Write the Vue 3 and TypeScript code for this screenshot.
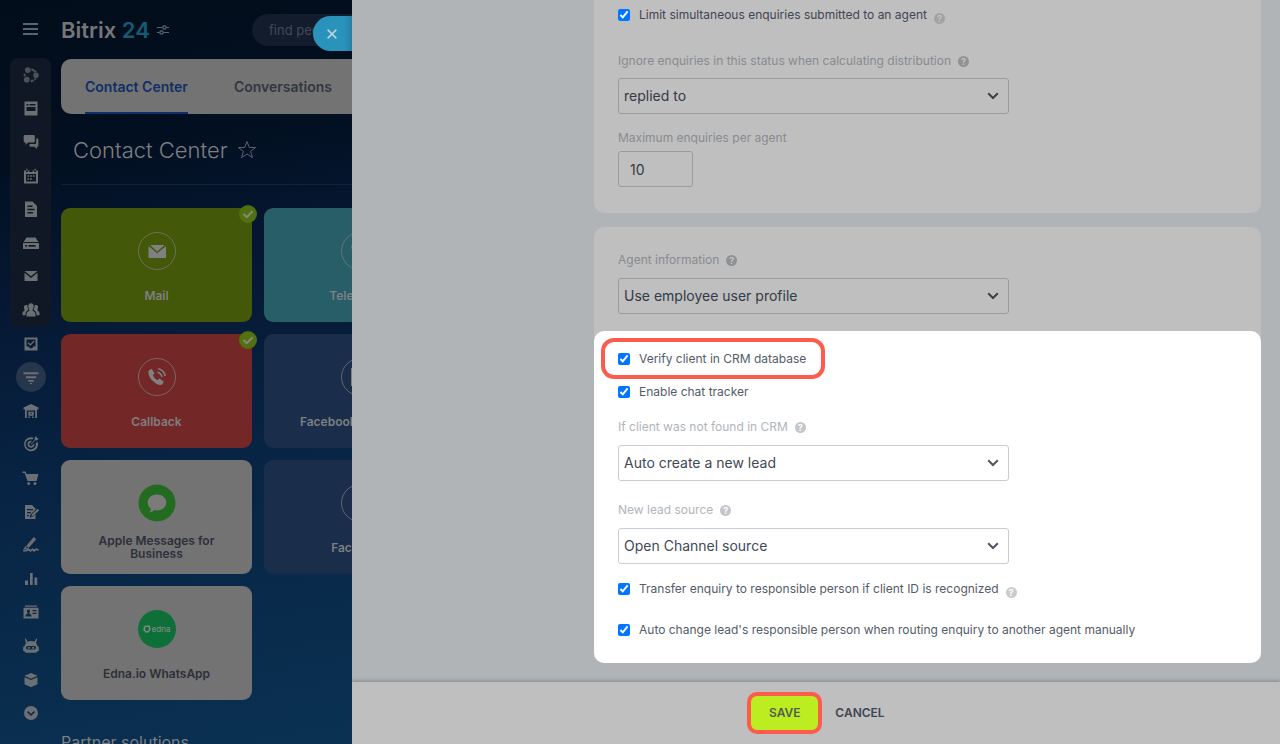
<script setup lang="ts">
import { ref } from 'vue'

interface Tile {
  name: string
  tone: string
  icon: string
  active?: boolean
}

const tiles: Tile[] = [
  { name: 'Mail', tone: 'green', icon: 'mail', active: true },
  { name: 'Telephony', tone: 'teal', icon: 'phone' },
  { name: 'Callback', tone: 'red', icon: 'callback', active: true },
  { name: 'Facebook Messages', tone: 'navy', icon: 'fb' },
  { name: 'Apple Messages for Business', tone: 'plain', icon: 'apple' },
  { name: 'Facebook', tone: 'navy', icon: 'none' },
  { name: 'Edna.io WhatsApp', tone: 'plain', icon: 'edna' },
]

interface NavItem {
  label: string
  path: string
  current?: boolean
  soft?: boolean
}

const pinned: NavItem[] = [
  { label: 'Collaboration', soft: true, path: 'M4.800 .2a2.900 2.900 0 1 1 0 5.800a2.900 2.900 0 0 1 0-5.800zM13 5.400a2.800 2.800 0 1 1 0 5.600a2.800 2.800 0 0 1 0-5.600zM3.800 9.800a2.900 2.900 0 1 1 0 5.800a2.900 2.900 0 0 1 0-5.800zM8.400 1.600l2.600.6-.6 2L8.300 3.800zM11.600 2.600l2 2-1.800 1.200-1.600-1.800zM7.600 13l2.600-.6.8 1.800-3 1.200zM11 12l1.500-1.200 1.200 1-1.900 1.900zM.6 6.400l2 .6.2 2.200L.8 9.400z' },
  { label: 'Feed', path: 'M1.500 1.500h13v14h-13zM3.500 4v1.500h2V4zM6.500 4v1.500h6V4zM3.500 7v4h9V7z' },
  { label: 'Messenger', path: 'M2 1h8.500a1.300 1.300 0 0 1 1.300 1.300v5a1.300 1.300 0 0 1-1.300 1.300H5.200L2.600 11V8.600H2A1.300 1.300 0 0 1 .7 7.300v-5A1.300 1.300 0 0 1 2 1zM13.200 4.500h1.200a1 1 0 0 1 1 1v6.200a1 1 0 0 1-1 1h-.6V15l-2.500-2.300H7.500a1 1 0 0 1-1-1V10h5.400a1.300 1.300 0 0 0 1.300-1.300z' },
  { label: 'Calendar', path: 'M1 2.500h2V4h2V2.500h1.500V4h3V2.500H11V4h2V2.500h2v13H1zM3 6v7.500h10V6zM4.500 7.200h1.700v1.600H4.500zM7.200 7.200h1.700v1.600H7.200zM9.900 7.200h1.700v1.600H9.900zM4.500 10.200h1.700v1.600H4.500zM7.200 10.200h1.700v1.600H7.200zM3.300.8h1.200v2H3.300zM11.500.8h1.200v2h-1.200z' },
  { label: 'Documents', path: 'M2 .5h7.500L14 5v11H2zM4.500 4.500V6h5V4.500zM4.500 7.700v1.500h7V7.700zM4.500 11v1.500H10V11z' },
  { label: 'Drive', path: 'M3.500 2.500h9L15.500 7H.5zM0 8h16v6H0zM2.200 10v1.800H4V10zM5.500 10v1.800h7V10z' },
  { label: 'Mail', path: 'M1.500 3h13L8 8.200zM1.500 4.800L8 10l6.500-5.200V13h-13z' },
  { label: 'Workgroups', path: 'M8 1.200c1.700 0 2.700 1.200 2.700 3S9.500 7.600 9.500 8.200c0 1 3 1.200 3 3.800v2.500h-9V12c0-2.600 3-2.800 3-3.800 0-.6-1.200-1.900-1.200-4s1-3 2.700-3zM3.200 3c.6 0 1 .1 1.300.4 0 2.200.6 3.100 1 4.200-.4 1.200-2.900 1.500-3 4.400v1.300H-.5V11c0-2 2.200-2 2.200-3 0-.5-.8-1.300-.8-2.700C.9 3.700 1.800 3 3.200 3zM12.800 3c-.6 0-1 .1-1.300.4 0 2.200-.6 3.100-1 4.200.4 1.200 2.900 1.500 3 4.400v1.300h3V11c0-2-2.200-2-2.200-3 0-.5.8-1.300.8-2.700C15.100 3.700 14.200 3 12.800 3z' },
]

const others: NavItem[] = [
  { label: 'Tasks', path: 'M1.500 1.500h13v13h-13zM3.500 3.500v7h2.200l1 1.700h2.600l1-1.700h2.200v-7zM5.500 6.200L7.300 8l3.500-3.400.9 1-4.400 4.200-2.700-2.600z' },
  { label: 'CRM', current: true, path: 'M.5 3.200h15v2H.5zM2.800 7.200h10.400v2H2.800zM5.300 11h5.400v1.800H5.300zM7 14h2v1H7z' },
  { label: 'Inventory', path: 'M8 1l7.500 3.500v2H14V15h-1.800V7.500H3.800V15H2V6.500H.5v-2zM5.300 8.700h5.400v4H5.300zM7.400 9.700v1.500h1.200V9.700zM5.300 13.400H7V15H5.300zM9 13.400h1.700V15H9z' },
  { label: 'Marketing', path: 'M8 1.200c1 0 1.900.2 2.700.5L9.300 3.400A5.200 5.200 0 1 0 12.800 7l1.800-1.300A7 7 0 1 1 8 1.200zM8 4.700l.8.100-1 1.700a1.800 1.800 0 1 0 2 1.900l1.600-1A3.500 3.500 0 1 1 8 4.700zM7.500 8.200l4-4.200.2-2.500L13.500 0l.3 2 2 .4L14.200 4.300l-2.200.2-4 4.200z' },
  { label: 'Sales', path: 'M-.5 1.500h3l.9 2.500H15.500l-2 7H4.500L1.600 3H-.5zM5.700 12a1.500 1.500 0 1 1 0 3a1.500 1.500 0 0 1 0-3zM12 12a1.500 1.500 0 1 1 0 3a1.500 1.500 0 0 1 0-3z' },
  { label: 'Sites', path: 'M2 1h7l3.500 3.500v1L7.600 10.500 6.800 13.500l3-.8 2.700-2.500V15H2zM4 5v1.300h6V5zM4 8v1.200h4V8zM4 11v1.200h2V11zM14.500 4.800l1.600 1.500-5.600 5.500-2.200.7.700-2.200z' },
  { label: 'e-Signature', path: 'M10.800 0l2.400 2.200-6.500 7.500L2.800 11.600l1.600-4.200zM3 8.600l2.800 2.300-1.300 1H.6zM.2 12.400h3.300l2-1.200L7.500 12.800l2-1.600 1.700 1.400 1.600-1.300 2.900.8v1.700l-2.600-.5-1.900 1.600-1.800-1.500-2 1.600-2-1.500-1.600 1H.2z' },
  { label: 'Analytics', path: 'M2 9.500h3V14H2zM7 2h2.700v12H7zM11.500 6.500h2.700V14h-2.700z' },
  { label: 'Contacts', path: 'M2 1.500h12v1.200H2zM.5 3.800h15v10.700H.5zM5.500 5.500C4.300 5.500 4 6.300 4 7.200s.7 1.800.7 2.200-2.200.6-2.200 2V12.500h6v-1.100c0-1.400-2.200-1.600-2.200-2S7 8.100 7 7.200s-.3-1.700-1.500-1.700zM9.500 6v1.300h4V6zM9.500 8.700V10h4V8.700z' },
  { label: 'Automation', path: 'M2.800.5l1.800 3.200Q8 2.500 11.400 3.700L13.200.5l1 .5-1.200 4Q14.300 6.500 14.500 8.500l1.300.3v4.100l-1.300.3Q14.300 14.500 12.500 14.800h-9Q1.700 14.500 1.500 13.200L.2 12.900V8.800l1.300-.3Q1.700 6.500 3 5L1.800 1zM4.500 8Q3 8.200 3 9.800t1.500 1.700h7Q13 11.300 13 9.800T11.500 8zM5 9h1.800v1.700H5zM9.200 9H11v1.700H9.200z' },
  { label: 'Market', path: 'M8 1l6.500 2.800L8 6.700 1.500 3.800zM1.500 5.200L8 8l6.500-2.800v7L8 15.200l-6.500-3z' },
  { label: 'More', path: 'M8 1a7 7 0 1 1 0 14A7 7 0 0 1 8 1zM5 6L4 7.200 8 11l4-3.800L11 6 8 8.800z' },
]

const limitEnquiries = ref(true)
const ignoreStatus = ref('replied to')
const maxEnquiries = ref('10')
const agentInfo = ref('Use employee user profile')
const verifyClient = ref(true)
const chatTracker = ref(true)
const notFound = ref('Auto create a new lead')
const leadSource = ref('Open Channel source')
const transferEnquiry = ref(true)
const autoChange = ref(true)
</script>

<template>
  <div class="app">
    <div class="portal">
      <nav class="rail" aria-label="Main menu">
        <button class="burger" type="button" aria-label="Menu"><i></i><i></i><i></i></button>
        <div class="group pinned">
          <a v-for="item in pinned" :key="item.label" href="#" class="nav" :class="{ soft: item.soft }" :aria-label="item.label">
            <svg viewBox="0 0 16 16"><path :d="item.path" fill-rule="evenodd" /></svg>
          </a>
        </div>
        <div class="group others">
          <a v-for="item in others" :key="item.label" href="#" class="nav" :class="{ current: item.current }" :aria-label="item.label">
            <svg viewBox="0 0 16 16"><path :d="item.path" fill-rule="evenodd" /></svg>
          </a>
        </div>
      </nav>

      <div class="desk">
        <header class="top">
          <a href="#" class="logo">Bitrix <b>24</b></a>
          <svg class="tune" viewBox="0 0 12 10"><path d="M0 2.500h5.500M9.500 2.500H12M0 7.500h2.500M6.500 7.500H12" /><circle cx="7.500" cy="2.500" r="1.700" /><circle cx="4.500" cy="7.500" r="1.700" /></svg>
          <input class="search" type="text" placeholder="find people, documents" aria-label="Search" />
        </header>

        <div class="tabs">
          <a href="#" class="tab selected">Contact Center</a>
          <a href="#" class="tab">Conversations</a>
        </div>

        <div class="heading">
          <h1>Contact Center</h1>
          <svg class="star" viewBox="0 0 20 20"><path d="M10 1.500l2.300 6h6.300l-5 3.900 1.900 6.300L10 14l-5.500 3.700 1.900-6.300-5-3.900h6.300z" /></svg>
        </div>

        <div class="tiles">
          <a v-for="tile in tiles" :key="tile.name" href="#" class="tile" :class="tile.tone">
            <svg v-if="tile.icon === 'apple'" class="mark" viewBox="0 0 38 38">
              <circle cx="19" cy="19" r="18.500" fill="#236b20" />
              <path d="M19 10.500c5.200 0 9.300 3.500 9.300 8s-4.100 8-9.300 8c-1 0-2-.1-2.900-.4-1.200 1.500-3 2.200-5 2.300 1.300-1.200 1.900-2.400 1.800-3.700C10.800 23.200 9.700 21 9.700 18.500c0-4.500 4.100-8 9.300-8z" fill="#7b7b7b" />
            </svg>
            <span v-else-if="tile.icon === 'edna'" class="mark edna">
              <svg viewBox="0 0 8 8"><path d="M2 1.500l4-.5 1 2.500L5.500 6.500 3 7 1 4.500z" /></svg>edna
            </span>
            <svg v-else class="mark" viewBox="0 0 38 38">
              <circle cx="19" cy="19" r="18.500" class="ring" />
              <g v-if="tile.icon === 'mail'" class="glyph"><path d="M12 13h14.500L19.200 19.500zM10.500 14l8.700 7.200L28 14v12H10.500z" /></g>
              <g v-else-if="tile.icon === 'callback'" class="glyph">
                <path d="M11.200 12.200l2.300-1.400 3.100 4.400-1.700 2c.9 2.200 2.400 3.700 4.600 4.800l2.200-1.400 4.200 3.200-1.500 2.500c-1.300 1-3.600.9-6-.5-3.800-2.200-6.700-5.600-7.700-9.200-.5-2-.4-3.500.5-4.400z" />
                <path d="M19.500 14.200q3.800 1 4.600 4.800M20.200 10.800q5.900 1.300 7 7.200" class="wave" />
              </g>
              <g v-else-if="tile.icon === 'phone'" class="glyph"><path d="M11.200 12.200l2.300-1.400 3.100 4.400-1.700 2c.9 2.200 2.400 3.700 4.600 4.800l2.200-1.400 4.200 3.200-1.500 2.500c-1.300 1-3.600.9-6-.5-3.800-2.200-6.700-5.600-7.700-9.200-.5-2-.4-3.500.5-4.400z" /></g>
              <g v-else-if="tile.icon === 'fb'" class="glyph"><path d="M10 10h18v18h-5v-7h2.500V18H23v-2h2.500v-3h-3q-2.500 0-2.500 3v2h-2v3h2v7H10z" /></g>
            </svg>
            <span class="name">{{ tile.name }}</span>
            <svg v-if="tile.active" class="badge" viewBox="0 0 18 18"><circle cx="9" cy="9" r="9" /><path d="M4.500 9l3.300 3.200 5.800-6" /></svg>
          </a>
        </div>
        <h2>Partner solutions</h2>
      </div>

      <button class="close" type="button" aria-label="Close">
        <svg viewBox="0 0 10 10"><path d="M.6.6l8.800 8.800M9.400.6L.6 9.400" /></svg>
      </button>
    </div>

    <main class="slider">
      <form class="body" @submit.prevent>
        <section class="card first">
          <div class="check">
            <input id="limit" v-model="limitEnquiries" type="checkbox" />
            <label for="limit">Limit simultaneous enquiries submitted to an agent</label>
            <span class="hint low">?</span>
          </div>
          <div class="caption status"><label for="status">Ignore enquiries in this status when calculating distribution</label><span class="hint">?</span></div>
          <div class="select">
            <select id="status" v-model="ignoreStatus"><option>replied to</option></select>
            <svg viewBox="0 0 12 8"><path d="M1.200 1.200L6 6l4.800-4.800" /></svg>
          </div>
          <div class="caption maximum"><label for="max">Maximum enquiries per agent</label></div>
          <input id="max" v-model="maxEnquiries" class="number" type="text" />
        </section>

        <section class="card second">
          <div class="dimmed">
            <div class="caption"><label for="agent">Agent information</label><span class="hint">?</span></div>
            <div class="select">
              <select id="agent" v-model="agentInfo"><option>Use employee user profile</option></select>
              <svg viewBox="0 0 12 8"><path d="M1.200 1.200L6 6l4.800-4.800" /></svg>
            </div>
          </div>
          <div class="spot">
            <div class="check outlined">
              <input id="verify" v-model="verifyClient" type="checkbox" />
              <label for="verify">Verify client in CRM database</label>
            </div>
            <div class="check tracker">
              <input id="tracker" v-model="chatTracker" type="checkbox" />
              <label for="tracker">Enable chat tracker</label>
            </div>
            <div class="caption lost"><label for="lost">If client was not found in CRM</label><span class="hint">?</span></div>
            <div class="select">
              <select id="lost" v-model="notFound"><option>Auto create a new lead</option></select>
              <svg viewBox="0 0 12 8"><path d="M1.200 1.200L6 6l4.800-4.800" /></svg>
            </div>
            <div class="caption source"><label for="source">New lead source</label><span class="hint">?</span></div>
            <div class="select">
              <select id="source" v-model="leadSource"><option>Open Channel source</option></select>
              <svg viewBox="0 0 12 8"><path d="M1.200 1.200L6 6l4.800-4.800" /></svg>
            </div>
            <div class="check transfer">
              <input id="transfer" v-model="transferEnquiry" type="checkbox" />
              <label for="transfer">Transfer enquiry to responsible person if client ID is recognized</label>
              <span class="hint low">?</span>
            </div>
            <div class="check change">
              <input id="change" v-model="autoChange" type="checkbox" />
              <label for="change">Auto change lead's responsible person when routing enquiry to another agent manually</label>
            </div>
          </div>
        </section>
      </form>
      <footer class="actions">
        <button class="save" type="button">SAVE</button>
        <button class="cancel" type="button">CANCEL</button>
      </footer>
    </main>
  </div>
</template>

<style>
body {
  background: #b0b4b7;
}
</style>

<style scoped>
* {
  box-sizing: border-box;
}
.app {
  display: grid;
  grid-template-columns: 352px minmax(0, 1fr);
  height: 100vh;
  overflow: hidden;
  font-family: Inter, "Liberation Sans", sans-serif;
  font-size: 12px;
  line-height: 16px;
  color: #434956;
}
a {
  color: inherit;
  text-decoration: none;
}
button {
  border: 0;
  padding: 0;
  background: none;
  font: inherit;
  cursor: pointer;
}

/* portal page behind the slider */
.portal {
  position: relative;
  display: flex;
  height: 100vh;
  overflow: hidden;
  color: #7d7f82;
  background: linear-gradient(170deg, #020d1a 0%, #020f20 20%, #051732 36%, #082444 62%, #0a3152 100%);
}
.rail {
  display: grid;
  grid-template-rows: 58px 8fr 12fr;
  flex: 0 0 61px;
  height: 100vh;
  padding-bottom: 14px;
}
.burger {
  display: grid;
  gap: 3px;
  align-self: center;
  justify-self: center;
  width: 15px;
}
.burger i {
  height: 2px;
  background: #5d636b;
}
.group {
  display: grid;
  grid-auto-rows: 1fr;
  margin: 0 10px;
}
.pinned {
  border-radius: 8px;
  background: #0f1824;
}
.nav {
  display: grid;
  place-items: center;
  min-height: 0;
}
.nav svg {
  width: 16px;
  height: 16px;
  overflow: visible;
  fill: #6c6f73;
}
.nav.soft svg {
  fill: #4c5259;
}
.nav.current {
  justify-self: center;
  align-self: center;
  width: 30px;
  height: 30px;
  border-radius: 50%;
  background: #26364d;
}
.desk {
  flex: 0 0 auto;
  width: 600px;
}
.top {
  display: flex;
  align-items: center;
  height: 59px;
}
.logo {
  width: 96px;
  font-size: 22px;
  line-height: 26px;
  font-weight: 600;
  white-space: nowrap;
  color: #747678;
}
.logo b {
  font-weight: 600;
  color: #185a72;
}
.tune {
  width: 12px;
  height: 10px;
  fill: none;
  stroke: #5d636b;
  stroke-width: 1.200;
}
.search {
  width: 320px;
  height: 32px;
  margin-left: 83px;
  padding: 0 17px;
  border: 0;
  border-radius: 16px;
  background: #131c2c;
  font: inherit;
  font-size: 13px;
}
.search::placeholder {
  color: #414955;
}
.tabs {
  display: flex;
  gap: 46px;
  height: 55px;
  padding: 0 24px;
  border-radius: 10px;
  background: #737373;
}
.tab {
  padding-top: 19px;
  font-size: 14px;
  line-height: 18px;
  font-weight: 600;
  color: #32363f;
}
.tab.selected {
  border-bottom: 2px solid #0f2f6c;
  color: #102f68;
}
.heading {
  display: flex;
  align-items: center;
  gap: 9px;
  height: 71px;
  padding: 2px 0 0 12px;
  border-bottom: 1px solid #10223a;
}
h1 {
  margin: 0;
  font-size: 22px;
  line-height: 30px;
  font-weight: 300;
}
.star {
  width: 20px;
  height: 20px;
  fill: none;
  stroke: #5d636b;
}
.tiles {
  display: grid;
  grid-template-columns: 191px 191px;
  grid-auto-rows: 114px;
  gap: 12px;
  margin-top: 23px;
}
.tile {
  position: relative;
  display: flex;
  flex-direction: column;
  align-items: center;
  padding: 24px 32px 2px;
  border-radius: 9px;
  text-align: center;
  font-size: 12px;
  line-height: 13px;
  font-weight: 600;
}
.green { background: #435808; }
.teal { background: #285e68; }
.red { background: #732726; }
.navy { background: #1a2d4b; }
.plain {
  background: #737373;
  color: #2d303b;
}
.name {
  display: flex;
  flex: 1;
  align-items: center;
}
.navy .name {
  white-space: nowrap;
}
.mark {
  width: 38px;
  height: 38px;
  flex: none;
}
.ring {
  fill: none;
  stroke: #7d7f7a;
  stroke-opacity: 0.700;
}
.glyph {
  fill: #7f8080;
}
.wave {
  fill: none;
  stroke: #7f8080;
  stroke-width: 1.600;
}
.edna {
  display: flex;
  align-items: center;
  justify-content: center;
  gap: 1px;
  border-radius: 50%;
  background: #0f6f38;
  color: #7c8b81;
  font-size: 8px;
  line-height: 10px;
  font-weight: 500;
}
.edna svg {
  width: 8px;
  height: 8px;
  fill: none;
  stroke: #7c8b81;
  stroke-width: 1.500;
}
.badge {
  position: absolute;
  top: -3px;
  right: -5px;
  width: 18px;
  height: 18px;
  fill: #517010;
}
.badge path {
  fill: none;
  stroke: #85887f;
  stroke-width: 2;
}
h2 {
  margin: 32px 0 0;
  font-size: 16px;
  line-height: 20px;
  font-weight: 400;
}
.close {
  position: absolute;
  top: 16px;
  right: 0;
  display: flex;
  align-items: center;
  width: 39px;
  height: 35px;
  padding-left: 14px;
  border-radius: 18px 0 0 18px;
  background: linear-gradient(90deg, #2993bb 80%, #2480a4);
}
.close svg {
  width: 10px;
  height: 10px;
  fill: none;
  stroke: #bfd3da;
  stroke-width: 1.500;
}

/* slider panel */
.slider {
  display: flex;
  flex-direction: column;
  height: 100vh;
  background: #b0b4b7;
}
.body {
  flex: 1;
  min-height: 0;
  padding: 0 19px 0 242px;
}
.card {
  background: #bfbfbf;
}
.first {
  padding: 7px 24px 26px;
  border-radius: 0 0 10px 10px;
}
.second {
  margin-top: 14px;
  border-radius: 10px;
}
.dimmed {
  padding: 25px 24px 17px;
}
.spot {
  padding: 7px 24px 25px;
  border-radius: 10px;
  background: #fff;
}
.check {
  display: flex;
  align-items: center;
  height: 16px;
  color: #535c69;
}
.first .check {
  color: #3f4552;
}
.check input {
  width: 12px;
  height: 12px;
  margin: 0 9px 0 0;
  accent-color: #0075ff;
}
.outlined {
  width: fit-content;
  height: 41px;
  margin-left: -17px;
  padding: 0 15px 0 13px;
  border: 4px solid #fd5c4c;
  border-radius: 13px;
}
.caption {
  display: flex;
  align-items: center;
  height: 16px;
  margin-bottom: 10px;
  color: #888b90;
}
.spot .caption {
  color: #b0b5bb;
}
.hint {
  display: grid;
  place-items: center;
  width: 11px;
  height: 11px;
  margin-left: 7px;
  border-radius: 50%;
  background: #8f9295;
  color: #c4c4c4;
  font-size: 9px;
  line-height: 11px;
  font-weight: 700;
}
.spot .hint {
  background: #c3c6ca;
  color: #fff;
}
.hint.low {
  align-self: flex-end;
  margin-bottom: -1px;
  background: #a0a2a4;
}
.spot .hint.low {
  background: #c9cbce;
}
.status { margin-top: 30px; margin-bottom: 9px; }
.maximum { margin-top: 16px; margin-bottom: 5px; }
.tracker { margin-top: 5px; }
.lost { margin-top: 19px; }
.source { margin-top: 21px; }
.transfer { margin-top: 17px; }
.change { margin-top: 25px; }
.select {
  position: relative;
  width: 391px;
  max-width: 100%;
}
select,
.number {
  display: block;
  height: 36px;
  border: 1px solid #979ca2;
  border-radius: 3px;
  background: transparent;
  font: inherit;
  font-size: 14px;
  color: #343943;
}
select {
  width: 100%;
  padding: 0 32px 0 5px;
  appearance: none;
}
.number {
  width: 75px;
  padding: 0 11px;
}
.spot select {
  border-color: #c6cdd3;
  color: #424956;
}
.select svg {
  position: absolute;
  top: 14px;
  right: 10px;
  width: 12px;
  height: 8px;
  fill: none;
  stroke: #3a404b;
  stroke-width: 2;
  pointer-events: none;
}
.spot .select svg {
  stroke: #4c5563;
}
.actions {
  display: flex;
  align-items: center;
  justify-content: center;
  gap: 13px;
  flex: 0 0 62px;
  background: #bfbfbf;
  box-shadow: 0 -1px 4px rgba(60, 66, 72, 0.400);
  font-weight: 600;
}
.save {
  width: 75px;
  height: 42px;
  border: 4px solid #fd5c4c;
  border-radius: 10px;
  background: #bbed21;
  color: #535c55;
}
.cancel {
  color: #3f4550;
}
</style>
